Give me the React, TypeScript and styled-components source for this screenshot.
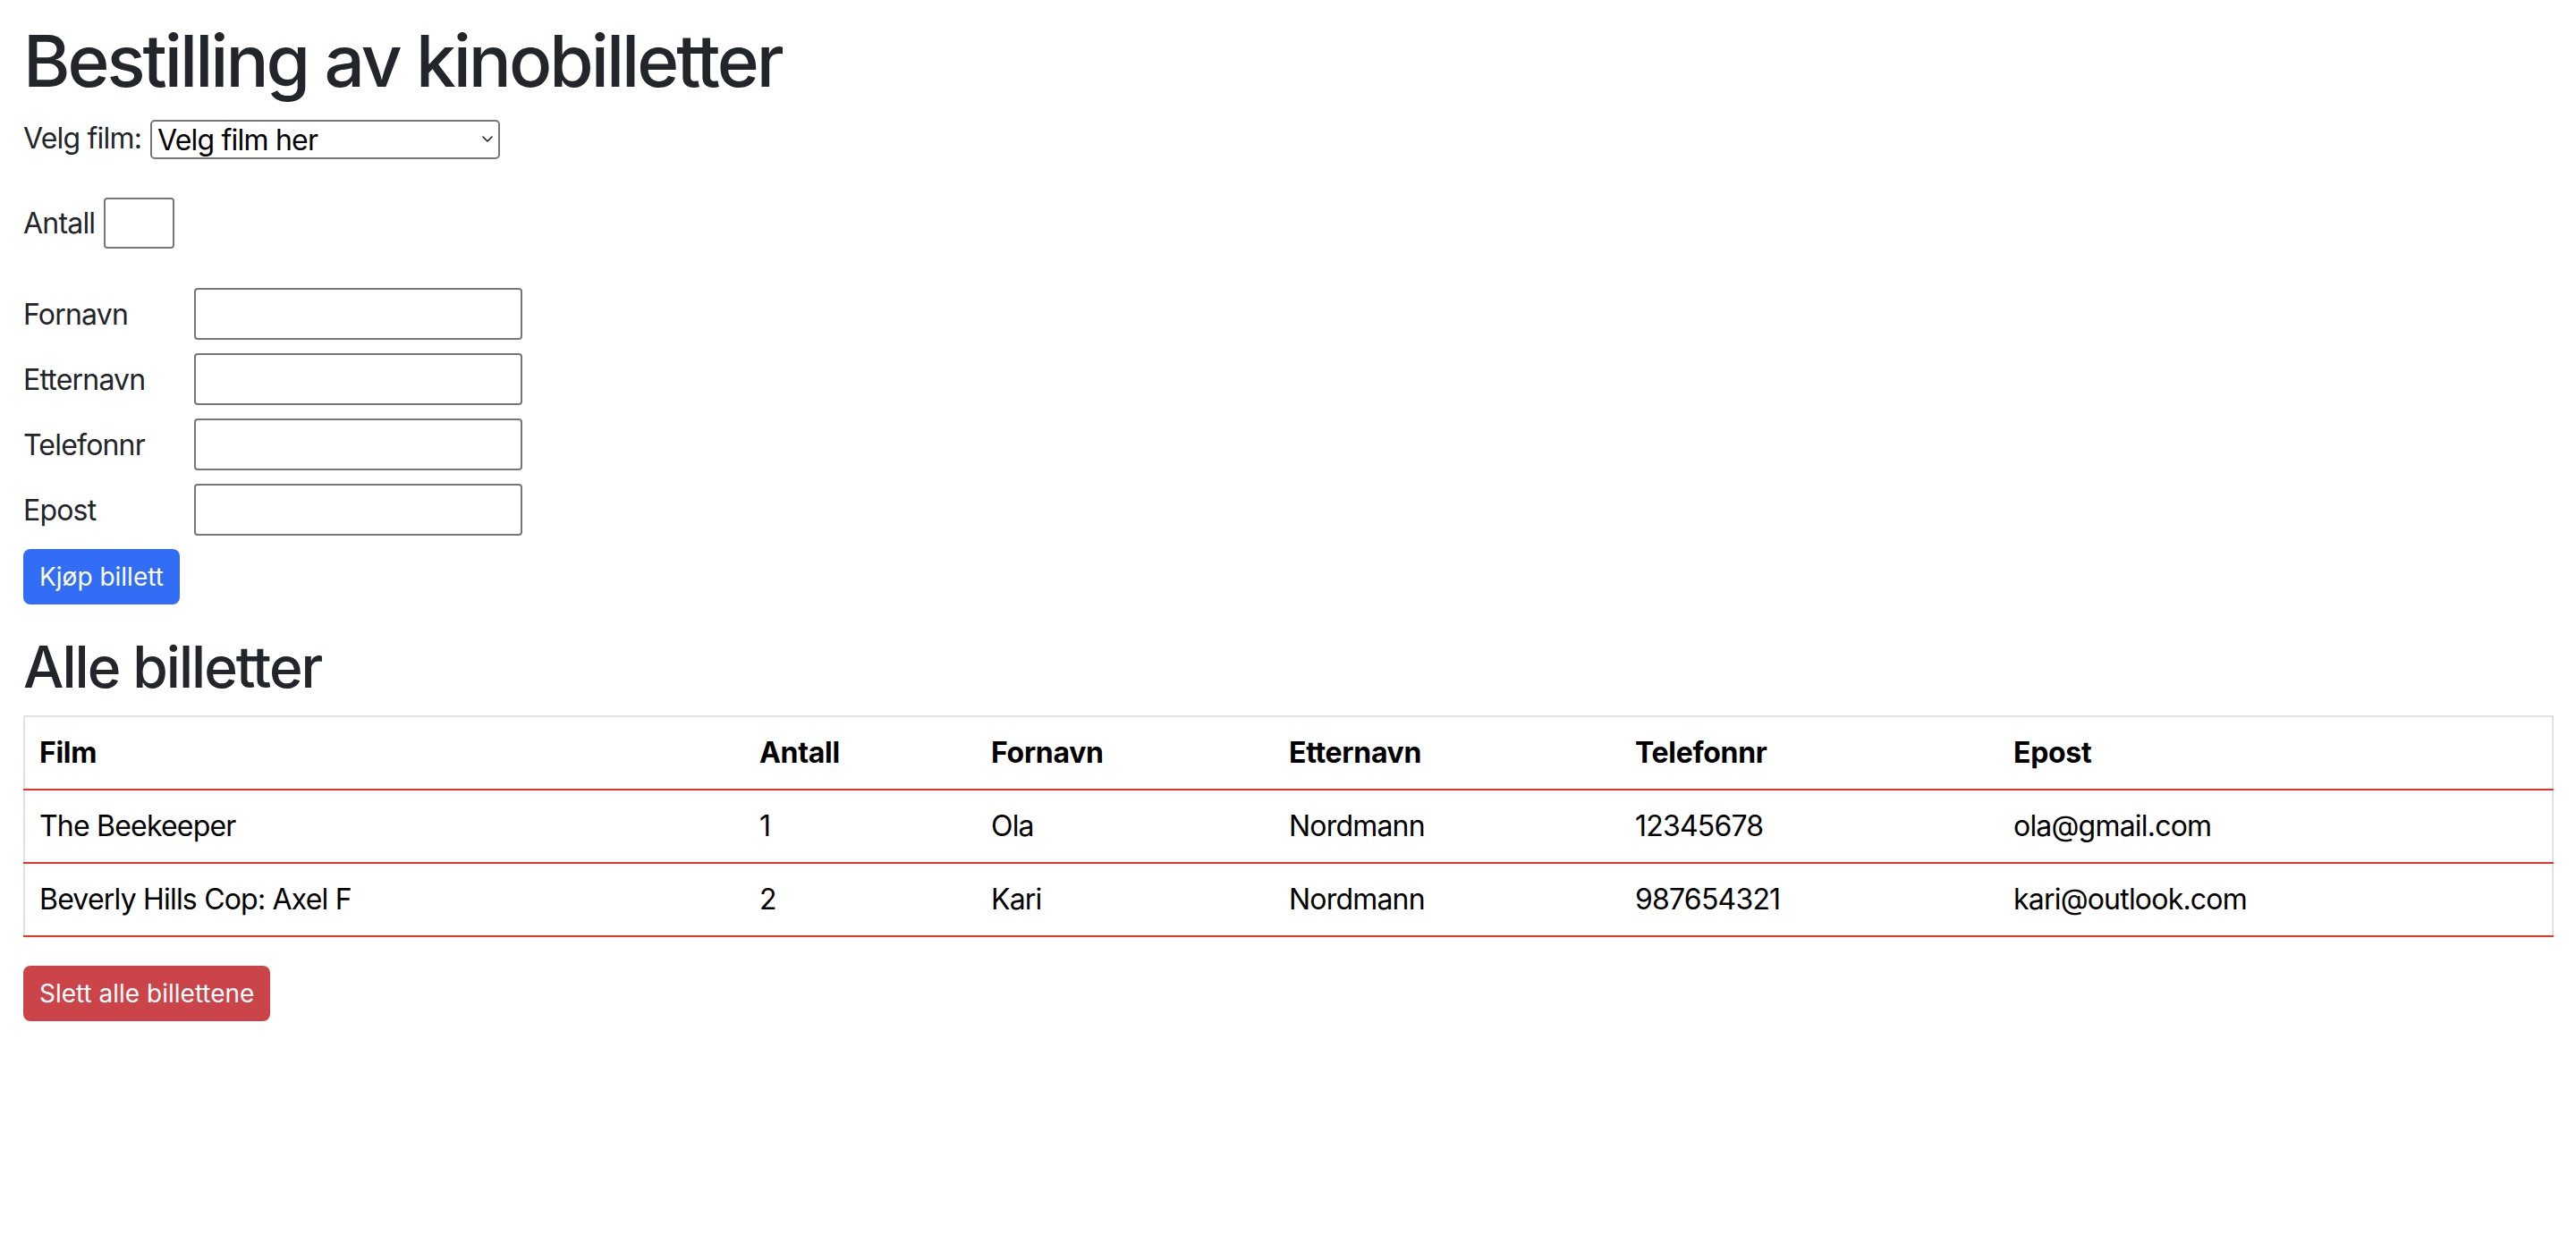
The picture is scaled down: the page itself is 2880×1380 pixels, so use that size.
import React from "react";
import styled, { createGlobalStyle } from "styled-components";

const Global = createGlobalStyle`
  html, body { margin: 0; padding: 0; background: #ffffff; }
  body {
    font-family: Inter, "Noto Sans", "Liberation Sans", sans-serif;
    color: #222529;
    font-size: 32px;
    line-height: 48px;
  }
  * { box-sizing: border-box; }
`;

const Page = styled.main`
  padding: 20px 25px 40px 26px;
`;

const Title = styled.h1`
  margin: 0 0 16px;
  font-size: 80px;
  line-height: 96px;
  font-weight: 500;
  letter-spacing: -3px;
`;

const Subtitle = styled.h2`
  margin: 31px 0 16px;
  font-size: 64px;
  line-height: 77px;
  font-weight: 500;
  letter-spacing: -2px;
`;

const InlineRow = styled.div<{ $mt?: number }>`
  display: flex;
  align-items: center;
  gap: 10px;
  margin-top: ${(p) => p.$mt ?? 0}px;
`;

const Label = styled.label`
  line-height: 45px;
  letter-spacing: -0.8px;
`;

const SelectWrap = styled.div`
  position: relative;
  flex: none;
  width: 391px;
  height: 44px;
`;

const Select = styled.select`
  appearance: none;
  -webkit-appearance: none;
  width: 100%;
  height: 100%;
  margin: 0;
  padding: 0 30px 0 6px;
  border: 2px solid #767676;
  border-radius: 5px;
  background: #ffffff;
  color: #000000;
  font-family: inherit;
  font-size: 32px;
  letter-spacing: -0.8px;
`;

const Chevron = styled.svg`
  position: absolute;
  right: 8px;
  top: 19px;
  width: 12px;
  height: 7px;
  pointer-events: none;
`;

const TextInput = styled.input<{ $w: number; $h: number }>`
  flex: none;
  width: ${(p) => p.$w}px;
  height: ${(p) => p.$h}px;
  margin: 0;
  padding: 2px 4px;
  border: 2px solid #767676;
  border-radius: 4px;
  font-family: inherit;
  font-size: 32px;
  background: #ffffff;
`;

const FormGrid = styled.div`
  display: grid;
  grid-template-columns: 191px 367px;
  row-gap: 15px;
  align-items: center;
  margin-top: 44px;
`;

const Button = styled.button<{ $variant: "primary" | "danger"; $mt: number }>`
  display: block;
  margin: ${(p) => p.$mt}px 0 0;
  padding: 8px 16px;
  border: 2px solid transparent;
  border-radius: 8px;
  font-family: inherit;
  font-size: 28px;
  line-height: 42px;
  letter-spacing: 0;
  color: #ffffff;
  background: ${(p) => (p.$variant === "primary" ? "#316df5" : "#cb444a")};
  cursor: pointer;
`;

const Table = styled.table`
  width: 100%;
  border-collapse: collapse;
  table-layout: fixed;
  border: 2px solid #dfe2e6;
  border-bottom: none;
  color: #000000;
`;

const Th = styled.th`
  text-align: left;
  font-weight: 700;
  padding: 16px;
  line-height: 48px;
  letter-spacing: -0.3px;
  border-bottom: 2px solid #ea3323;
`;

const Td = styled.td`
  padding: 16px;
  line-height: 48px;
  letter-spacing: -0.8px;
  border-bottom: 2px solid #ea3323;
  white-space: nowrap;
`;

const columns = [
  { key: "film", title: "Film", width: 806 },
  { key: "antall", title: "Antall", width: 259 },
  { key: "fornavn", title: "Fornavn", width: 333 },
  { key: "etternavn", title: "Etternavn", width: 387 },
  { key: "telefonnr", title: "Telefonnr", width: 423 },
  { key: "epost", title: "Epost", width: undefined as number | undefined },
] as const;

const tickets = [
  { film: "The Beekeeper", antall: "1", fornavn: "Ola", etternavn: "Nordmann", telefonnr: "12345678", epost: "ola@gmail.com" },
  { film: "Beverly Hills Cop: Axel F", antall: "2", fornavn: "Kari", etternavn: "Nordmann", telefonnr: "987654321", epost: "kari@outlook.com" },
];

const fields = ["Fornavn", "Etternavn", "Telefonnr", "Epost"];

export default function App() {
  return (
    <Page>
      <Global />
      <Title>Bestilling av kinobilletter</Title>
      <InlineRow>
        <Label htmlFor="film">Velg film:</Label>
        <SelectWrap>
          <Select id="film" defaultValue="">
            <option value="">Velg film her</option>
            <option>The Beekeeper</option>
            <option>Beverly Hills Cop: Axel F</option>
          </Select>
          <Chevron viewBox="0 0 12 7" aria-hidden="true">
            <path d="M1 1 L6 6 L11 1" fill="none" stroke="#222" strokeWidth="1.6" strokeLinecap="round" strokeLinejoin="round" />
          </Chevron>
        </SelectWrap>
      </InlineRow>
      <InlineRow $mt={44}>
        <Label htmlFor="antall">Antall</Label>
        <TextInput id="antall" $w={79} $h={57} />
      </InlineRow>
      <FormGrid>
        {fields.map((f) => (
          <React.Fragment key={f}>
            <Label htmlFor={f}>{f}</Label>
            <TextInput id={f} $w={367} $h={58} />
          </React.Fragment>
        ))}
      </FormGrid>
      <Button $variant="primary" $mt={15}>Kjøp billett</Button>
      <Subtitle>Alle billetter</Subtitle>
      <Table>
        <colgroup>
          {columns.map((c) => (
            <col key={c.key} style={c.width ? { width: c.width } : undefined} />
          ))}
        </colgroup>
        <thead>
          <tr>
            {columns.map((c) => (
              <Th key={c.key}>{c.title}</Th>
            ))}
          </tr>
        </thead>
        <tbody>
          {tickets.map((t, i) => (
            <tr key={i}>
              {columns.map((c) => (
                <Td key={c.key}>{t[c.key]}</Td>
              ))}
            </tr>
          ))}
        </tbody>
      </Table>
      <Button $variant="danger" $mt={32}>Slett alle billettene</Button>
    </Page>
  );
}
